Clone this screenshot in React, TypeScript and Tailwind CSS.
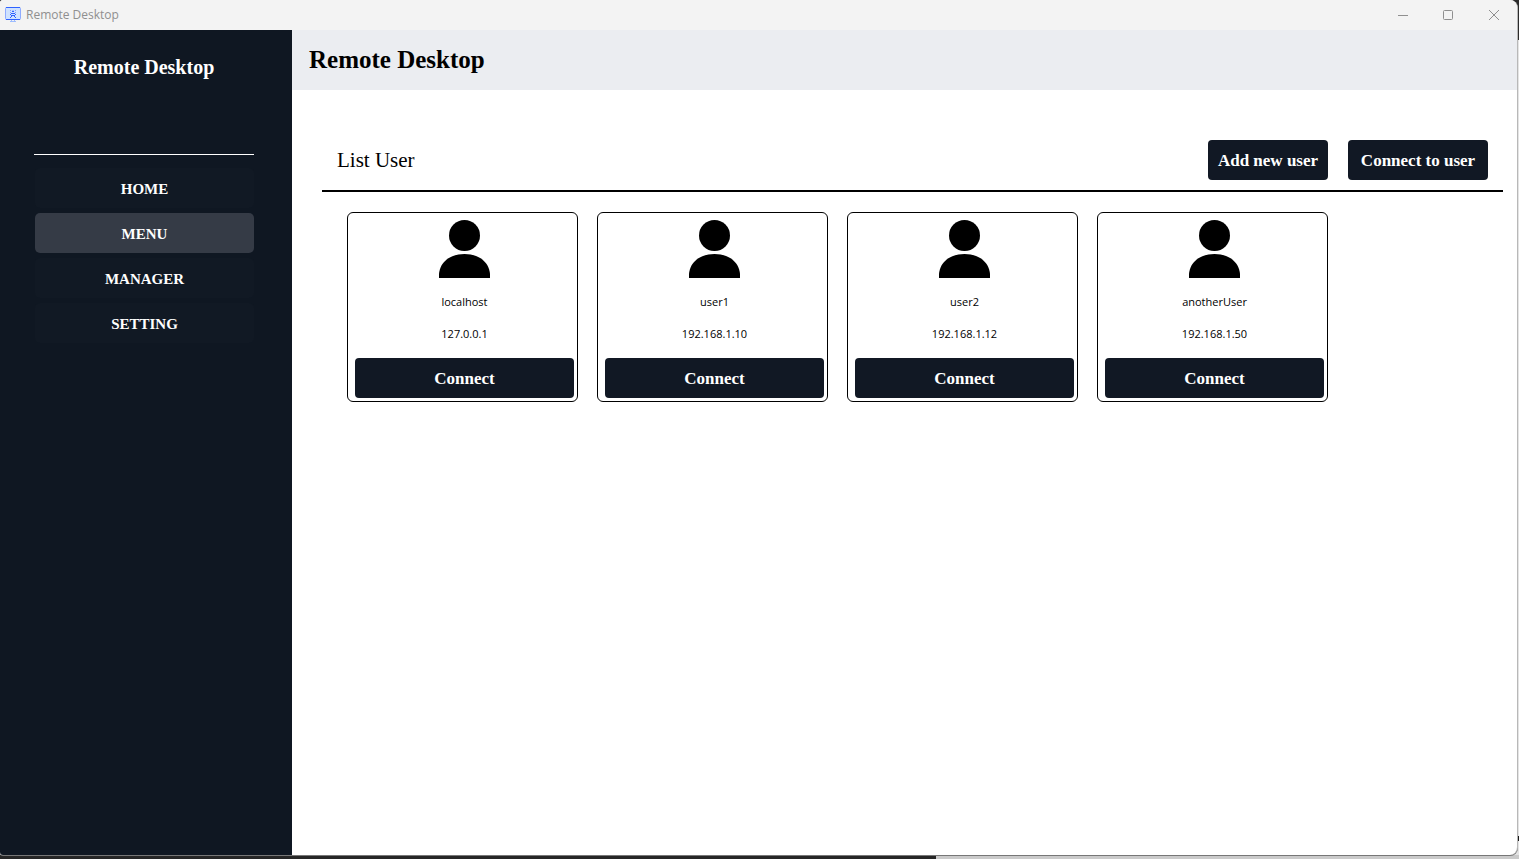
import React from "react";

type User = { name: string; ip: string };

const users: User[] = [
  { name: "localhost", ip: "127.0.0.1" },
  { name: "user1", ip: "192.168.1.10" },
  { name: "user2", ip: "192.168.1.12" },
  { name: "anotherUser", ip: "192.168.1.50" },
];

const navItems = ["HOME", "MENU", "MANAGER", "SETTING"];

function AppIcon() {
  return (
    <svg width="16" height="16" viewBox="0 0 16 16" aria-hidden="true">
      <rect x="0.5" y="0.5" width="15" height="12" rx="1" fill="#cfe2ff" stroke="#8fabff" />
      <path d="M1 0.5h14M1 12.5h14" stroke="#2f62ff" />
      <path d="M7 4.5h2M6 6.500h4M7 8.500h2M5.500 7v1M10.500 7v1M6.500 8v2M9.500 8v2M5 10.500h1M10 10.500h1" stroke="#2f62ff" fill="none" />
      <path d="M5 3.500h1M10 3.500h1M8 3v1M5 5.500h1M10 5.500h1" stroke="#7f9fff" />
      <path d="M6.500 13v1M9.500 13v1M5 14.500h6" stroke="#9dbcff" />
    </svg>
  );
}

function UserIcon() {
  return (
    <svg width="51" height="58" viewBox="0 0 51 58" aria-hidden="true">
      <circle cx="25.500" cy="15.500" r="15.500" />
      <path d="M0 58V54C1 42 11 34 25.500 34S50 42 51 54V58Z" />
    </svg>
  );
}

function TitleBar() {
  return (
    <div className="flex h-[30px] shrink-0 items-center justify-between bg-[#f3f3f3] pl-[5px] text-[#8f8f8f]">
      <div className="flex items-center gap-[5px]">
        <AppIcon />
        <span className="text-xs">Remote Desktop</span>
      </div>
      <div className="flex h-7">
        <button aria-label="Minimize" className="flex w-[45px] items-center justify-center">
          <svg width="10" height="10" stroke="currentColor"><path d="M0 5.500h10" /></svg>
        </button>
        <button aria-label="Maximize" className="flex w-[45px] items-center justify-center">
          <svg width="10" height="10" fill="none" stroke="currentColor"><rect x="0.5" y="0.5" width="9" height="9" rx="1" /></svg>
        </button>
        <button aria-label="Close" className="flex w-[47px] items-center justify-center">
          <svg width="10" height="10" stroke="currentColor"><path d="M0 0l10 10M10 0L0 10" /></svg>
        </button>
      </div>
    </div>
  );
}

function Sidebar() {
  return (
    <aside className="flex w-[292px] shrink-0 flex-col bg-[#0f1722] pr-[38px] pl-[34px] font-['Liberation_Serif',serif] font-bold text-white">
      <div className="flex h-[125px] justify-center border-b border-white pt-[23px]">
        <div className="text-xl leading-7">Remote Desktop</div>
      </div>
      <nav className="flex flex-col gap-[5px] pt-[13px] pl-px">
        {navItems.map((item) => (
          <button
            key={item}
            aria-current={item === "MENU" ? "page" : undefined}
            className={
              item === "MENU"
                ? "h-10 rounded-[5px] bg-[#353b46] pt-0.5 text-[15px]"
                : "h-10 rounded-[5px] bg-[#111924] pt-0.5 text-[15px]"
            }
          >
            {item}
          </button>
        ))}
      </nav>
    </aside>
  );
}

function UserCard({ user }: { user: User }) {
  return (
    <article className="flex w-[231px] flex-col items-center rounded-[6px] border border-black pt-[7px] pr-[3px] pb-[3px] pl-[7px] text-[11px]">
      <UserIcon />
      <div className="mt-4 leading-4">{user.name}</div>
      <div className="mt-4 leading-4">{user.ip}</div>
      <button className="mt-4 h-10 w-full rounded-[4px] bg-[#111824] pt-0.5 font-['Liberation_Serif',serif] text-[17px] font-bold text-white">
        Connect
      </button>
    </article>
  );
}

export default function App() {
  return (
    <div className="relative isolate flex min-h-screen flex-col pr-px pb-1 font-['Open_Sans','Noto_Sans',sans-serif]">
      <div aria-hidden="true" className="absolute inset-0 -z-10 flex flex-col justify-between bg-[#e4e4e4]">
        <div className="h-10 bg-[#2b2b2b]" />
        <div className="flex h-[23px] flex-col justify-between">
          <div className="flex h-[5px] justify-end">
            <div className="w-2 bg-[#181818]" />
          </div>
          <div className="flex h-1 bg-[#cacaca]">
            <div className="w-[936px] bg-[#262626]" />
          </div>
        </div>
      </div>
      <div className="flex flex-1 flex-col overflow-hidden rounded-l-[3px] rounded-r-lg border-r border-[#b8b8b8] bg-white text-black shadow-[0_1px_0_#777]">
        <TitleBar />
        <div className="flex flex-1">
          <Sidebar />
          <main className="flex min-w-0 flex-1 flex-col">
            <header className="flex h-[60px] items-center bg-[#ebedf1] px-[17px]">
              <h1 className="font-['Liberation_Serif',serif] text-[25px] font-bold">Remote Desktop</h1>
            </header>
            <section className="pt-[50px] pr-[14px] pl-[30px]">
              <div className="flex items-center justify-between border-b-2 border-black pr-[15px] pb-[10px] pl-[15px] font-['Liberation_Serif',serif]">
                <h2 className="pt-0.5 text-[21px]">List User</h2>
                <div className="flex gap-5 text-[17px] font-bold text-white">
                  <button className="h-10 w-[120px] rounded-[4px] bg-[#111824] pt-0.5">Add new user</button>
                  <button className="h-10 w-[140px] rounded-[4px] bg-[#111824] pt-0.5">Connect to user</button>
                </div>
              </div>
              <div className="flex flex-wrap gap-[19px] pt-5 pl-[25px]">
                {users.map((user) => (
                  <UserCard key={user.name} user={user} />
                ))}
              </div>
            </section>
          </main>
        </div>
      </div>
    </div>
  );
}
